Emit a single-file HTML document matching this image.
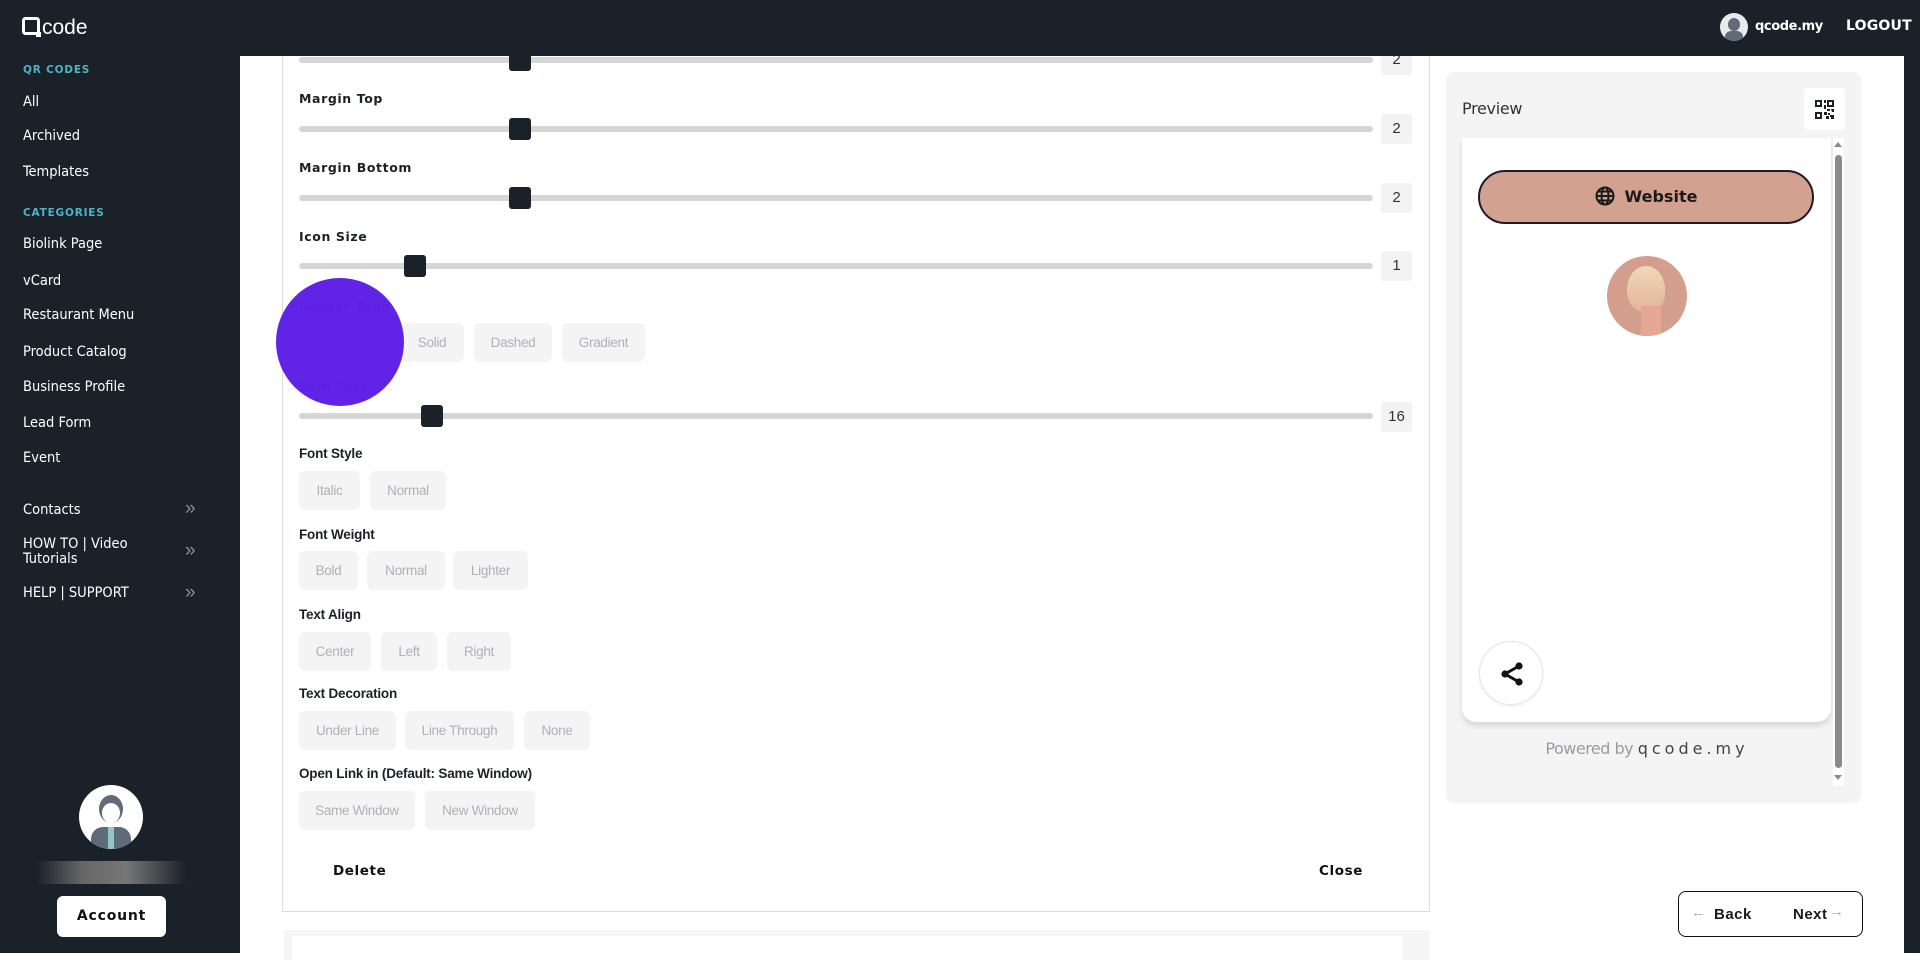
<!DOCTYPE html>
<html><head><meta charset="utf-8"><style>
*{margin:0;padding:0;box-sizing:border-box}
body{width:1920px;height:953px;overflow:hidden;position:relative;background:#fff;font-family:"Liberation Sans",sans-serif}
.a{position:absolute}
#side{left:0;top:0;width:240px;height:953px;background:#1b2129}
#top{left:0;top:0;width:1920px;height:56px;background:#1b2129;z-index:5}
#rs{left:1904px;top:0;width:16px;height:953px;background:#1b2129}
.sh{color:#4fb3c4;font:bold 10.5px "DejaVu Sans",sans-serif;letter-spacing:.8px;left:23px}
.si{color:#fff;font-size:14.5px;left:23px;font-family:"DejaVu Sans Condensed","DejaVu Sans",sans-serif}
.chev{color:#8a9099;font-size:19px;left:185px}
.track{left:299px;width:1074px;height:6px;border-radius:3px;background:#d6d6d6}
.th{width:22px;height:22px;border-radius:3px;background:#1b2129}
.val{left:1381px;width:31px;height:30px;background:#f3f3f3;border-radius:3px;color:#333;font-size:15px;text-align:center;line-height:30px}
.lb{left:299px;font:bold 12.5px "DejaVu Sans",sans-serif;color:#1b2129;letter-spacing:.6px}
.lb2{left:299px;font:bold 13.5px "Liberation Sans",sans-serif;color:#1b2129;letter-spacing:-.2px}
.b{height:39px;background:#f4f4f5;border-radius:6px;color:#b0b0b6;font-size:13.5px;text-align:center;line-height:39px;letter-spacing:-.3px}
</style></head><body>
<div class="a" id="side"></div>
<div class="a" id="top">
 <svg class="a" style="left:22px;top:15px" width="78" height="26" viewBox="0 0 78 26">
  <rect x="1.5" y="3.5" width="15" height="15" rx="2" fill="none" stroke="#fff" stroke-width="3"/>
  <rect x="14" y="17" width="5" height="5" fill="#fff"/>
  <text x="20" y="19" fill="#fff" font-family="Liberation Sans,sans-serif" font-size="21">code</text>
 </svg>
 <div class="a" style="left:1720px;top:13px;width:28px;height:28px;border-radius:50%;background:#e8eaec;overflow:hidden">
  <div class="a" style="left:8px;top:5px;width:12px;height:13px;border-radius:50%;background:#5f6b78"></div>
  <div class="a" style="left:5px;top:18px;width:18px;height:12px;border-radius:6px 6px 0 0;background:#5f6b78"></div>
 </div>
 <div class="a" style="left:1755px;top:19px;color:#fff;font:bold 13px 'DejaVu Sans',sans-serif;letter-spacing:-.4px">qcode.my</div>
 <div class="a" style="left:1846px;top:18px;color:#fff;font:bold 14px 'DejaVu Sans',sans-serif;letter-spacing:.2px">LOGOUT</div>
</div>
<div class="a" id="rs"></div>

<div class="a sh" style="top:64px">QR CODES</div>
<div class="a si" style="top:94px">All</div>
<div class="a si" style="top:128px">Archived</div>
<div class="a si" style="top:164px">Templates</div>
<div class="a sh" style="top:207px">CATEGORIES</div>
<div class="a si" style="top:236px">Biolink Page</div>
<div class="a si" style="top:273px">vCard</div>
<div class="a si" style="top:307px">Restaurant Menu</div>
<div class="a si" style="top:344px">Product Catalog</div>
<div class="a si" style="top:379px">Business Profile</div>
<div class="a si" style="top:415px">Lead Form</div>
<div class="a si" style="top:450px">Event</div>
<div class="a si" style="top:502px">Contacts</div>
<div class="a si" style="top:537px;line-height:15px">HOW TO | Video<br>Tutorials</div>
<div class="a si" style="top:585px">HELP | SUPPORT</div>
<div class="a chev" style="top:498px">»</div>
<div class="a chev" style="top:540px">»</div>
<div class="a chev" style="top:582px">»</div>
<div class="a" style="left:79px;top:785px;width:64px;height:64px;border-radius:50%;background:#fff;overflow:hidden">
 <div class="a" style="left:20px;top:10px;width:24px;height:28px;border-radius:50%;background:#5f6b78"></div>
 <div class="a" style="left:23px;top:18px;width:18px;height:20px;border-radius:50%;background:#fff"></div>
 <div class="a" style="left:12px;top:42px;width:40px;height:24px;border-radius:12px 12px 0 0;background:#5f6b78"></div>
 <div class="a" style="left:29px;top:42px;width:6px;height:22px;background:#8fc7c4"></div>
</div>
<div class="a" style="left:37px;top:861px;width:149px;height:23px;background:linear-gradient(90deg,#1b2129,#666 30%,#777 60%,#1b2129)"></div>
<div class="a" style="left:57px;top:896px;width:109px;height:41px;background:#fff;border-radius:6px;text-align:center;font:bold 14px 'DejaVu Sans',sans-serif;line-height:41px;letter-spacing:.8px;color:#111">Account</div>

<!-- main card -->
<div class="a" style="left:282px;top:56px;width:1148px;height:856px;border:1px solid #ddd;border-top:none"></div>
<div class="a" style="left:284px;top:930px;width:1146px;height:30px;background:#f5f5f5;padding:6px 0 0 8px"><div style="background:#fff;height:30px;width:1110px"></div></div>

<div class="a track" style="top:57px"></div><div class="a th" style="left:509px;top:49px"></div><div class="a val" style="top:45px;z-index:1">2</div>
<div class="a lb" style="top:91px">Margin Top</div>
<div class="a track" style="top:126px"></div><div class="a th" style="left:509px;top:118px"></div><div class="a val" style="top:114px">2</div>
<div class="a lb" style="top:160px">Margin Bottom</div>
<div class="a track" style="top:195px"></div><div class="a th" style="left:509px;top:187px"></div><div class="a val" style="top:183px">2</div>
<div class="a lb" style="top:229px">Icon Size</div>
<div class="a track" style="top:263px"></div><div class="a th" style="left:404px;top:255px"></div><div class="a val" style="top:251px">1</div>
<div class="a lb" style="top:299px;color:#9a9a9a">Border Type</div>
<div class="a b" style="left:299px;top:323px;width:92px"></div>
<div class="a b" style="left:400px;top:323px;width:64px">Solid</div>
<div class="a b" style="left:474px;top:323px;width:78px">Dashed</div>
<div class="a b" style="left:562px;top:323px;width:83px">Gradient</div>
<div class="a lb" style="top:379px;color:#9a9a9a">Font Size</div>
<div class="a track" style="top:413px"></div><div class="a th" style="left:421px;top:405px"></div><div class="a val" style="top:402px">16</div>
<div class="a" style="left:276px;top:278px;width:128px;height:128px;border-radius:50%;background:#5c1de6;opacity:.97"></div>

<div class="a lb2" style="top:446px">Font Style</div>
<div class="a b" style="left:299px;top:471px;width:61px">Italic</div>
<div class="a b" style="left:370px;top:471px;width:76px">Normal</div>
<div class="a lb2" style="top:527px">Font Weight</div>
<div class="a b" style="left:299px;top:551px;width:59px">Bold</div>
<div class="a b" style="left:367px;top:551px;width:78px">Normal</div>
<div class="a b" style="left:453px;top:551px;width:75px">Lighter</div>
<div class="a lb2" style="top:607px">Text Align</div>
<div class="a b" style="left:299px;top:632px;width:72px">Center</div>
<div class="a b" style="left:381px;top:632px;width:56px">Left</div>
<div class="a b" style="left:447px;top:632px;width:64px">Right</div>
<div class="a lb2" style="top:686px">Text Decoration</div>
<div class="a b" style="left:299px;top:711px;width:97px">Under Line</div>
<div class="a b" style="left:405px;top:711px;width:109px">Line Through</div>
<div class="a b" style="left:524px;top:711px;width:66px">None</div>
<div class="a lb2" style="top:766px">Open Link in (Default: Same Window)</div>
<div class="a b" style="left:299px;top:791px;width:116px">Same Window</div>
<div class="a b" style="left:425px;top:791px;width:110px">New Window</div>
<div class="a" style="left:333px;top:863px;font:bold 13.5px 'DejaVu Sans',sans-serif;letter-spacing:.6px;color:#111">Delete</div>
<div class="a" style="left:1319px;top:863px;font:bold 13.5px 'DejaVu Sans',sans-serif;letter-spacing:.6px;color:#111">Close</div>

<!-- preview -->
<div class="a" style="left:1446px;top:72px;width:415px;height:731px;background:#f4f4f4;border-radius:8px"></div>
<div class="a" style="left:1462px;top:99px;font-size:16px;color:#333;font-family:'DejaVu Sans',sans-serif;letter-spacing:-.3px">Preview</div>
<div class="a" style="left:1804px;top:88px;width:41px;height:42px;background:#fff;border-radius:4px">
 <svg class="a" style="left:11px;top:12px" width="19" height="19" viewBox="0 0 19 19" fill="#1b2129"><path d="M0 0h7v7H0zM2 2v3h3V2zM12 0h7v7h-7zM14 2v3h3V2zM0 12h7v7H0zM2 14v3h3v-3zM9 0h2v3H9zM9 5h2v4H9zM12 9h3v2h-3zM16 9h3v3h-2zM9 12h3v3H9zM13 13h2v2h-2zM15 15h4v4h-3v-2h-1zM11 16h3v3h-3z"/></svg>
</div>
<div class="a" style="left:1462px;top:138px;width:369px;height:584px;background:#fff;border-radius:0 0 14px 14px;box-shadow:0 4px 6px rgba(0,0,0,.12)"></div>
<div class="a" style="left:1833px;top:138px;width:11px;height:648px;background:#fff"></div>
<div class="a" style="left:1835px;top:155px;width:7px;height:613px;background:#8a8a8a;border-radius:4px"></div>
<div class="a" style="left:1834px;top:142px;width:0;height:0;border:4px solid transparent;border-bottom:5px solid #8a8a8a;border-top:0"></div>
<div class="a" style="left:1834px;top:775px;width:0;height:0;border:4px solid transparent;border-top:5px solid #8a8a8a;border-bottom:0"></div>
<div class="a" style="left:1478px;top:170px;width:336px;height:54px;background:#d3a190;border:2px solid #1f1a2a;border-radius:27px;text-align:center;font:600 16px 'DejaVu Sans',sans-serif;line-height:50px;color:#1a1a1a">
 <svg style="vertical-align:-4px;margin-right:10px" width="20" height="20" viewBox="0 0 20 20" fill="none" stroke="#1a1a1a" stroke-width="2"><circle cx="10" cy="10" r="8.5"/><ellipse cx="10" cy="10" rx="3.5" ry="8.5"/><path d="M1.5 10h17M3 5.5h14M3 14.5h14"/></svg>Website</div>
<div class="a" style="left:1607px;top:256px;width:80px;height:80px;border-radius:50%;background:#d49e8c;overflow:hidden">
 <div class="a" style="left:20px;top:10px;width:38px;height:46px;border-radius:50% 50% 40% 45%;background:linear-gradient(#f0d8b8,#e4b49a)"></div>
 <div class="a" style="left:34px;top:50px;width:20px;height:30px;background:#e4a894"></div>
</div>
<div class="a" style="left:1479px;top:641px;width:64px;height:64px;border-radius:50%;background:#fff;border:1px solid #e6e6e6;box-shadow:0 1px 3px rgba(0,0,0,.08)">
 <svg class="a" style="left:20px;top:19px" width="24" height="26" viewBox="0 0 24 26"><path d="M19 5L5 13l14 8" fill="none" stroke="#111" stroke-width="3"/><circle cx="19" cy="5" r="3.6" fill="#111"/><circle cx="5" cy="13" r="3.6" fill="#111"/><circle cx="19" cy="21" r="3.6" fill="#111"/></svg>
</div>
<div class="a" style="left:1462px;top:739px;width:370px;text-align:center;font-size:16px;color:#9a9aa2;font-family:'DejaVu Sans',sans-serif;letter-spacing:-.5px">Powered by <span style="color:#444;letter-spacing:4px">qcode.my</span></div>

<div class="a" style="left:1678px;top:891px;width:185px;height:46px;border:1.5px solid #111;border-radius:8px">
 <span class="a" style="left:12px;top:12px;color:#aaa;font-size:15px">←</span>
 <span class="a" style="left:35px;top:14px;font:bold 15px 'Liberation Sans',sans-serif;letter-spacing:.5px;color:#1a1a1a">Back</span>
 <span class="a" style="left:114px;top:14px;font:bold 15px 'Liberation Sans',sans-serif;letter-spacing:.5px;color:#1a1a1a">Next</span>
 <span class="a" style="left:150px;top:11px;color:#aaa;font-size:15px">→</span>
</div>
</body></html>
